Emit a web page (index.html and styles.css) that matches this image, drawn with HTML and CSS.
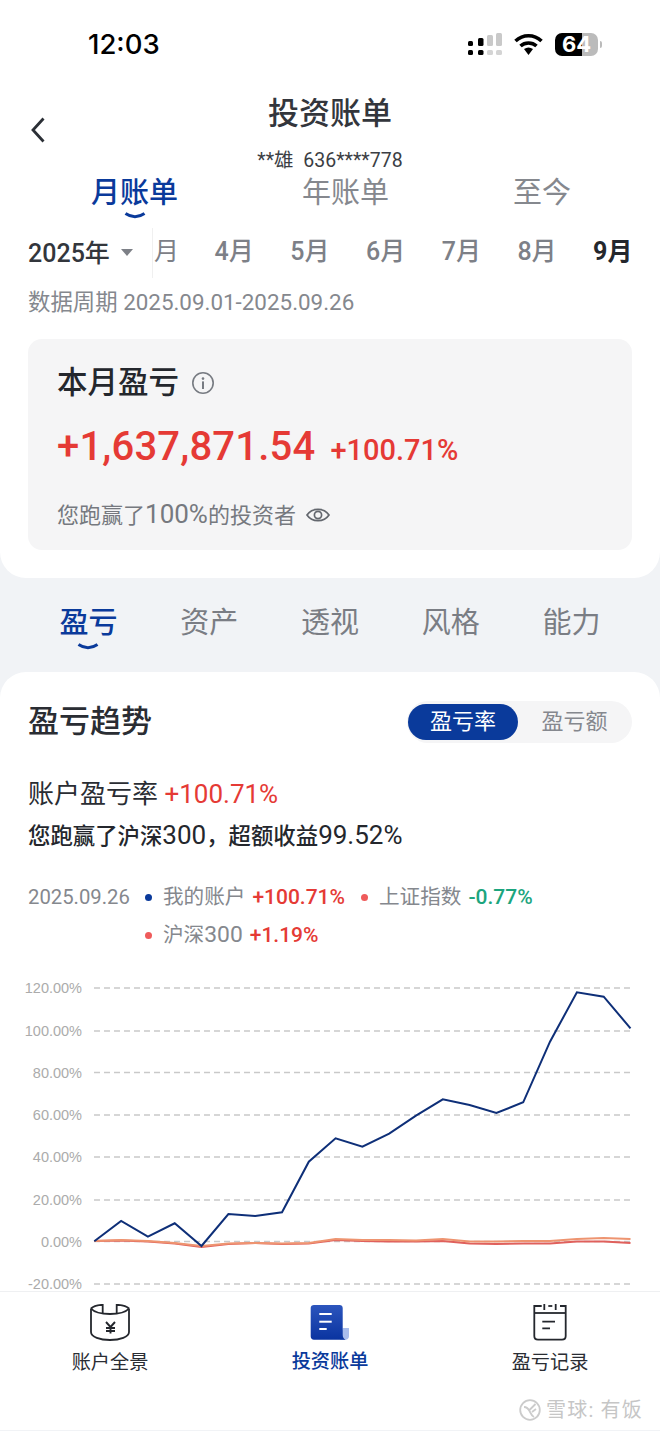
FILE: index.html
```html
<!DOCTYPE html>
<html>
	<head>
		<meta charset="utf-8" />
		<title>投资账单</title>
		<link rel="stylesheet" href="styles.css">
	</head>
	<body>
		<div class="page">
			<div class="top-panel">
				<div class="status-bar">
					<span class="clock">12:03</span>
					<div class="status-icons">
						<svg class="signal" width="34" height="23" viewBox="0 0 34 23">
							<rect x="0" y="8" width="5" height="5" rx="1.5" fill="#000"/>
							<rect x="0" y="17" width="5" height="5" rx="1.5" fill="#000"/>
							<rect x="10" y="5" width="5.5" height="8" rx="1.5" fill="#000"/>
							<rect x="10" y="17" width="5.5" height="5" rx="1.5" fill="#000"/>
							<rect x="19" y="2" width="6" height="11" rx="1.5" fill="#c9c9c9"/>
							<rect x="19" y="17" width="6" height="5" rx="1.5" fill="#d4d4d4"/>
							<rect x="28" y="0" width="6" height="13" rx="1.5" fill="#c9c9c9"/>
							<rect x="28" y="17" width="6" height="5" rx="1.5" fill="#d4d4d4"/>
						</svg>
						<svg class="wifi" width="29" height="22" viewBox="0 0 29 22">
							<path d="M1.5 8 C9 1 20 1 27.5 8" fill="none" stroke="#000" stroke-width="3.6"/>
							<path d="M6.5 13 C11 9 18 9 22.5 13" fill="none" stroke="#000" stroke-width="3.6"/>
							<path d="M10 16 C13 14 16 14 19 16 L14.5 22 Z" fill="#000"/>
						</svg>
						<div class="battery"><span class="battery-level">64</span></div>
						<span class="battery-tip"></span>
					</div>
				</div>

				<div class="title-row">
					<svg class="back" width="14" height="26" viewBox="0 0 14 26">
						<path d="M12.5 1.5 L2 13 L12.5 24.5" fill="none" stroke="#2b2f36" stroke-width="2.8"/>
					</svg>
					<h1 class="page-title">投资账单</h1>
				</div>
				<div class="account">**雄&nbsp; 636****778</div>

				<div class="bill-tabs">
					<div class="bill-tab active">月账单
						<svg class="smile" width="22" height="7" viewBox="0 0 22 7"><path d="M1.5 1.5 Q11 8 20.5 1.5" fill="none" stroke="#0a3a9b" stroke-width="3"/></svg>
					</div>
					<div class="bill-tab">年账单</div>
					<div class="bill-tab">至今</div>
				</div>

				<div class="month-row">
					<div class="year-pick">2025年<span class="caret"></span></div>
					<div class="months">
						<span class="month cut">月</span>
						<span class="month">4月</span>
						<span class="month">5月</span>
						<span class="month">6月</span>
						<span class="month">7月</span>
						<span class="month">8月</span>
						<span class="month current">9月</span>
					</div>
				</div>
				<div class="period">数据周期 <span class="period-dates">2025.09.01-2025.09.26</span></div>

				<div class="pnl-card">
					<div class="pnl-head">本月盈亏
						<svg width="24" height="24" viewBox="0 0 24 24">
							<circle cx="12" cy="12" r="10.2" fill="none" stroke="#777b82" stroke-width="1.6"/>
							<circle cx="12" cy="7.6" r="1.3" fill="#777b82"/>
							<rect x="11" y="10.4" width="2" height="7.6" fill="#777b82"/>
						</svg>
					</div>
					<div class="pnl-value">
						<span class="pnl-amount">+1,637,871.54</span>
						<span class="pnl-rate">+100.71%</span>
					</div>
					<div class="pnl-note"><span>您跑赢了<span class="num">100%</span>的投资者</span>
						<svg width="24" height="18" viewBox="0 0 24 18">
							<path d="M1 9 C6 1.5 18 1.5 23 9 C18 16.5 6 16.5 1 9 Z" fill="none" stroke="#63676e" stroke-width="1.7"/>
							<circle cx="12" cy="9" r="3.6" fill="none" stroke="#63676e" stroke-width="1.7"/>
						</svg>
					</div>
				</div>
			</div>

			<div class="section-tabs">
				<div class="section-tab active">盈亏
					<svg class="smile" width="22" height="7" viewBox="0 0 22 7"><path d="M1.5 1.5 Q11 8 20.5 1.5" fill="none" stroke="#0a3a9b" stroke-width="3"/></svg>
				</div>
				<div class="section-tab">资产</div>
				<div class="section-tab">透视</div>
				<div class="section-tab">风格</div>
				<div class="section-tab">能力</div>
			</div>

			<div class="trend-card">
				<div class="trend-head">
					<h2 class="trend-title">盈亏趋势</h2>
					<div class="segment">
						<span class="segment-item on">盈亏率</span>
						<span class="segment-item">盈亏额</span>
					</div>
				</div>
				<div class="rate-line">账户盈亏率 <span class="red">+100.71%</span></div>
				<div class="beat-line">您跑赢了沪深<span class="num">300</span>，超额收益<span class="num">99.52%</span></div>

				<div class="legend">
					<span class="legend-date">2025.09.26</span>
					<div class="legend-items">
						<span class="legend-item"><i class="dot blue"></i>我的账户 <b class="red">+100.71%</b></span>
						<span class="legend-item"><i class="dot coral"></i>上证指数 <b class="green">-0.77%</b></span>
						<span class="legend-item"><i class="dot coral"></i><span>沪深<span class="num">300</span></span> <b class="red">+1.19%</b></span>
					</div>
				</div>

				<svg class="chart" width="660" height="322" viewBox="0 970 660 322">
					<g class="grid">
						<line x1="94" x2="631" y1="988" y2="988"/>
						<line x1="94" x2="631" y1="1031" y2="1031"/>
						<line x1="94" x2="631" y1="1072.5" y2="1072.5"/>
						<line x1="94" x2="631" y1="1115" y2="1115"/>
						<line x1="94" x2="631" y1="1157" y2="1157"/>
						<line x1="94" x2="631" y1="1200" y2="1200"/>
						<line x1="94" x2="631" y1="1241.5" y2="1241.5"/>
						<line x1="94" x2="631" y1="1284" y2="1284"/>
					</g>
					<g class="axis">
						<text x="82" y="993">120.00%</text>
						<text x="82" y="1036">100.00%</text>
						<text x="82" y="1078">80.00%</text>
						<text x="82" y="1120">60.00%</text>
						<text x="82" y="1162">40.00%</text>
						<text x="82" y="1205">20.00%</text>
						<text x="82" y="1247">0.00%</text>
						<text x="82" y="1289">-20.00%</text>
					</g>
					<polyline class="line-sse" points="94.3,1241 121.1,1240.5 147.9,1241.5 174.7,1243.5 201.5,1247 228.4,1244 255.2,1243 282,1244 308.8,1243.5 335.6,1240 362.4,1241 389.2,1241.5 416,1241.5 442.8,1241 469.6,1243.5 496.4,1244 523.2,1243.5 550,1243.5 576.9,1241.5 603.7,1241.5 630.5,1243"/>
					<polyline class="line-hs" points="94.3,1241 121.1,1240 147.9,1241 174.7,1243 201.5,1246 228.4,1243.5 255.2,1243 282,1243.5 308.8,1243 335.6,1239 362.4,1240 389.2,1240 416,1240.5 442.8,1239 469.6,1241.5 496.4,1241.5 523.2,1241 550,1241 576.9,1239 603.7,1238 630.5,1239"/>
					<polyline class="line-me" points="94.3,1241.3 121.1,1221 147.9,1236.7 174.7,1223.3 201.5,1246 228.4,1214 255.2,1216 282,1212.3 308.8,1161.7 335.6,1138.3 362.4,1146.7 389.2,1133.7 416,1115.7 442.8,1099.3 469.6,1105 496.4,1113 523.2,1102.3 550,1041.7 576.9,992.3 603.7,996.7 630.5,1028.3"/>
				</svg>
			</div>

			<div class="bottom-nav">
				<div class="nav-item">
					<svg width="40" height="37" viewBox="0 0 40 37" fill="none" stroke="#24272d" stroke-width="1.8">
						<path d="M1 4.5 C4 8 12 10 20 10 C28 10 36 8 39 4.5"/>
						<path d="M1 4.5 C3 2.5 8 1 12.7 0.8 V10"/>
						<path d="M39 4.5 C37 2.5 32 1 26.7 0.8 V10"/>
						<path d="M1 4.5 V28 C1 33 10 36 20 36 C30 36 39 33 39 28 V4.5"/>
						<path d="M16 18 L20.5 23 L25 18 M20.5 23 V29.5 M16 24 H25 M16 27 H25" stroke-width="1.9"/>
					</svg>
					<span class="nav-label">账户全景</span>
				</div>
				<div class="nav-item active">
					<svg width="40" height="37" viewBox="0 0 40 37">
						<defs>
							<linearGradient id="docFill" x1="0" y1="0" x2="0" y2="1">
								<stop offset="0" stop-color="#2c55bd"/>
								<stop offset="1" stop-color="#0a34a0"/>
							</linearGradient>
						</defs>
						<path d="M32.7 24 H39 V32 C39 35 36.5 36 34 36 H30 Z" fill="#a9bdec"/>
						<path d="M4 1 H29.5 C31.5 1 32.7 2.2 32.7 4 V31 C32.7 33.5 34 35 35.5 35.7 H4 C2 35.7 0.7 34.5 0.7 32.5 V4 C0.7 2.2 2 1 4 1 Z" fill="url(#docFill)"/>
						<rect x="9.3" y="9" width="12.4" height="2" fill="#fff"/>
						<rect x="9.3" y="16.7" width="12.4" height="2" fill="#fff"/>
						<rect x="9.3" y="24" width="7.4" height="2" fill="#fff"/>
					</svg>
					<span class="nav-label">投资账单</span>
				</div>
				<div class="nav-item">
					<svg width="40" height="37" viewBox="0 0 40 37" fill="none" stroke="#24272d" stroke-width="1.8">
						<path d="M11.7 2 H4.3 V32 C4.3 34.5 5.5 35.7 8 35.7 H32 C34.5 35.7 35.7 34.5 35.7 32 V2 H30"/>
						<path d="M4.3 9 H35.7"/>
						<path d="M18.3 2 H22.3"/>
						<path d="M14.3 0 V6 M25.7 0 V6"/>
						<path d="M12.3 17.7 H25 M12.3 24.3 H20"/>
					</svg>
					<span class="nav-label">盈亏记录</span>
				</div>
			</div>

			<div class="watermark">
				<svg width="22" height="22" viewBox="0 0 22 22" fill="none" stroke="#cbcbcb" stroke-width="1.8">
					<circle cx="11" cy="11" r="9.8"/>
					<path d="M5 8 C9 8 10 11 11 13 C12 15 13 17 15 18 M16.5 5 L10 11.5 M13 13 L17 10"/>
				</svg>
				<span>雪球: 有饭</span>
			</div>
		</div>
	</body>
</html>
```
FILE: styles.css
```css
* {
	box-sizing: border-box;
}
html, body {
	margin: 0;
	padding: 0;
}
body {
	font-family: Roboto, "Noto Sans CJK SC", sans-serif;
	color: #24272d;
	background: #fff;
}
h1, h2 {
	margin: 0;
	font-weight: 500;
}
.page {
	position: relative;
	width: 660px;
	height: 1431px;
	display: flex;
	flex-direction: column;
	overflow: hidden;
	background: #f1f3f6;
}
.red { color: #e53a35; }
.green { color: #1ca57e; }
.num { font-size: 1.11em; }

/* top panel */
.top-panel {
	height: 578px;
	padding: 0 28px;
	background: #fff;
	border-radius: 0 0 26px 26px;
}
.status-bar {
	height: 88px;
	display: flex;
	align-items: center;
	justify-content: space-between;
	padding: 0 30px 0 60px;
}
.clock {
	font-family: Inter, sans-serif;
	font-size: 27.5px;
	font-weight: 500;
	color: #000;
}
.status-icons {
	display: flex;
	align-items: center;
}
.wifi { margin: 0 12px; }
.battery {
	width: 43px;
	height: 23px;
	border-radius: 7px;
	background: linear-gradient(90deg, #000 0 63%, #bbb 63% 100%);
	color: #fff;
	font: 700 22px/23px Inter, sans-serif;
	text-align: center;
}
.battery-tip {
	width: 2px;
	height: 7px;
	margin-left: 2px;
	border-radius: 0 2px 2px 0;
	background: #bbb;
}
.title-row {
	height: 55px;
	display: grid;
	grid-template-columns: 1fr auto 1fr;
	padding-top: 1px;
}
.back {
	align-self: end;
	margin: 0 0 0 3px;
}
.page-title {
	grid-column: 2;
	font-size: 31px;
	line-height: 50px;
	color: #33363c;
}
.account {
	height: 29px;
	padding-top: 5px;
	text-align: center;
	font-size: 19.5px;
	line-height: 26px;
	color: #3b3e44;
}
.bill-tabs {
	height: 40px;
	display: flex;
	gap: 124px;
	padding: 1px 0 0 63px;
}
.bill-tab {
	position: relative;
	font-size: 29px;
	line-height: 40px;
	color: #85888e;
}
.bill-tab.active {
	color: #0a3a9b;
	font-weight: 500;
}
.smile {
	position: absolute;
	left: 50%;
	bottom: -7px;
	margin-left: -11px;
}
.month-row {
	height: 50px;
	margin-top: 16px;
	display: flex;
	align-items: center;
}
.year-pick {
	width: 124px;
	margin-top: -4px;
	display: flex;
	align-items: center;
	font-size: 25px;
	font-weight: 500;
	color: #33363c;
}
.caret {
	margin: 2px 0 0 11px;
	border: 6.5px solid transparent;
	border-top: 7.5px solid #7d8087;
	border-bottom: 0;
}
.months {
	flex: 1;
	min-width: 0;
	display: flex;
	gap: 36.5px;
	height: 50px;
	border-left: 1px solid #f0f0f0;
}
.month {
	flex: none;
	white-space: nowrap;
	font-size: 25px;
	font-weight: 500;
	line-height: 48px;
	color: #7d8087;
}
.month.cut {
	margin-right: -1px;
	padding-left: 1px;
	font-weight: 400;
}
.month.current {
	color: #24272d;
	font-weight: 700;
}
.period {
	margin-top: 7px;
	font-size: 22.4px;
	line-height: 34px;
	color: #85888e;
}
.pnl-card {
	height: 211px;
	margin: 20px 0 0;
	padding: 23px 29px 0;
	background: #f5f5f6;
	border-radius: 14px;
}
.pnl-head {
	display: flex;
	align-items: center;
	gap: 12px;
	font-size: 30.5px;
	font-weight: 500;
	line-height: 42px;
}
.pnl-value {
	display: flex;
	align-items: baseline;
	gap: 15px;
	margin-top: 18px;
	color: #e53a35;
	font-weight: 500;
}
.pnl-amount {
	font-size: 40px;
	line-height: 50px;
	letter-spacing: 0.2px;
}
.pnl-rate {
	font-size: 29px;
}
.pnl-note {
	display: flex;
	align-items: center;
	gap: 10px;
	margin-top: 25px;
	font-size: 22px;
	line-height: 34px;
	color: #76797f;
}
.pnl-note .num {
	font-size: 26px;
}

/* section tabs */
.section-tabs {
	height: 94px;
	display: grid;
	grid-template-columns: repeat(5, 1fr);
	padding: 24px 28px 0;
}
.section-tab {
	position: relative;
	justify-self: center;
	height: 42px;
	font-size: 29px;
	line-height: 42px;
	color: #7a7d84;
}
.section-tab.active {
	color: #0a3a9b;
	font-weight: 500;
}
.section-tab .smile {
	bottom: -6px;
}

/* trend card */
.trend-card {
	flex: 1;
	min-height: 0;
	overflow: hidden;
	padding: 29px 28px 0;
	background: #fff;
	border-radius: 26px 26px 0 0;
}
.trend-head {
	display: flex;
	align-items: center;
	justify-content: space-between;
	height: 42px;
}
.trend-title {
	font-size: 31px;
	line-height: 40px;
	color: #2a2d33;
}
.segment {
	width: 225px;
	height: 42px;
	padding: 3px 1px;
	display: flex;
	background: #f5f5f6;
	border-radius: 21px;
}
.segment-item {
	flex: 1;
	text-align: center;
	font-size: 22px;
	line-height: 36px;
	color: #85888e;
}
.segment-item.on {
	flex: none;
	width: 110px;
	background: #0a3a9b;
	border-radius: 18px;
	color: #fff;
}
.rate-line {
	margin-top: 31px;
	font-size: 26px;
	line-height: 40px;
	color: #2a2d33;
}
.beat-line {
	margin-top: 3px;
	font-size: 22.4px;
	font-weight: 500;
	line-height: 36px;
	color: #24272d;
}
.beat-line .num {
	font-weight: 400;
	font-size: 26px;
}
.legend {
	display: flex;
	margin-top: 24px;
	font-size: 20.6px;
	line-height: 38px;
	color: #85888e;
}
.legend-date {
	width: 116px;
	flex: none;
	font-size: 20.3px;
}
.legend-items {
	display: flex;
	flex-wrap: wrap;
	column-gap: 15px;
}
.legend-item {
	display: flex;
	align-items: center;
	gap: 7px;
}
.legend-item b {
	font-weight: 500;
	font-size: 21px;
}
.dot {
	width: 7px;
	height: 7px;
	margin: 0 4px 0 1px;
	border-radius: 50%;
}
.dot.blue { background: #0a3a9b; }
.dot.coral { background: #ef5b5b; }
.chart {
	display: block;
	margin: 16px 0 0 -28px;
}
.grid line {
	stroke: #c9c9c9;
	stroke-width: 1.4;
	stroke-dasharray: 6 4;
}
.axis text {
	font-family: "Liberation Sans", sans-serif;
	font-size: 14.5px;
	fill: #ababab;
	text-anchor: end;
}
.chart polyline {
	fill: none;
}
.line-me {
	stroke: #0e2f78;
	stroke-width: 2;
}
.line-sse {
	stroke: #e0605c;
	stroke-width: 2;
}
.line-hs {
	stroke: #ee9470;
	stroke-width: 2;
}

/* bottom nav */
.bottom-nav {
	height: 140px;
	flex: none;
	display: grid;
	grid-template-columns: repeat(3, 1fr);
	padding-top: 12px;
	background: #fff;
	border-top: 1px solid #eff0f2;
	border-bottom: 1px solid #f1f3f6;
}
.nav-item {
	display: flex;
	flex-direction: column;
	align-items: center;
}
.nav-label {
	margin-top: 8px;
	font-size: 19.2px;
	line-height: 28px;
	color: #2a2d33;
}
.nav-item.active .nav-label {
	margin-top: 7px;
	color: #0a3a9b;
	font-weight: 500;
}
.watermark {
	position: absolute;
	right: 17px;
	bottom: 9px;
	display: flex;
	align-items: center;
	gap: 5px;
	font-size: 20px;
	letter-spacing: 1.2px;
	line-height: 24px;
	color: #c6c6c6;
}
```
